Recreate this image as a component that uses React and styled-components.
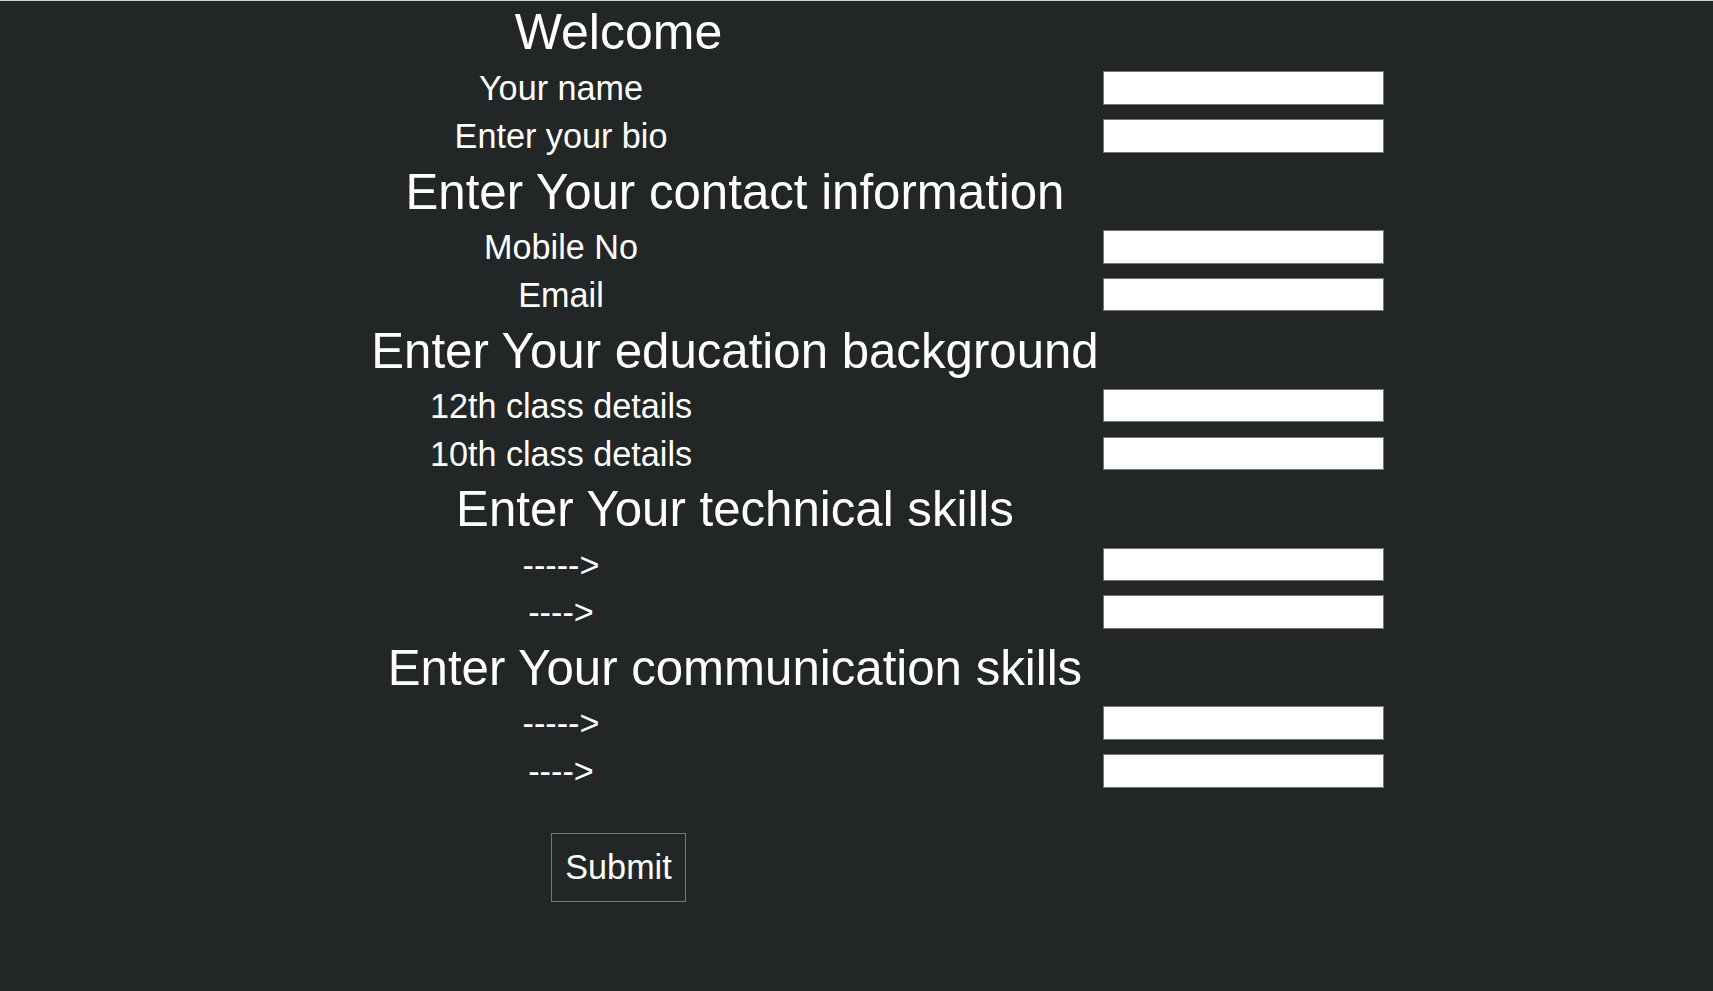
// Import dependencies
import React from 'react'
import styled, { createGlobalStyle } from 'styled-components'

// Global styles
const GlobalStyle = createGlobalStyle`
html, body {
  margin: 0;
  padding: 0;
  background-color: #222627;
}

body {
  color: #ffffff;
  font-family: 'Liberation Sans', Arial, sans-serif;
}
`

// Styled components
const Page = styled.div`
min-height: 100vh;
box-sizing: border-box;
border-top: 1px solid #cfcfcf;
padding-left: 367px;
`

const Form = styled.form`
display: grid;
grid-template-columns: 388px 115px 233px 281px;
align-items: center;
`

const Title = styled.h1`
margin: 0;
grid-column: 1 / span 2;
text-align: center;
font-size: 50px;
font-weight: 400;
line-height: 63.25px;
white-space: nowrap;
`

const Heading = styled.h2`
margin: 0;
grid-column: 1 / span 3;
text-align: center;
font-size: 49.2px;
font-weight: 400;
line-height: 63.25px;
white-space: nowrap;
`

const Label = styled.label`
grid-column: 1;
padding-top: 2px;
text-align: center;
font-size: 34.2px;
line-height: 45.75px;
white-space: nowrap;
`

const Input = styled.input`
grid-column: 4;
width: 281px;
height: 33.5px;
padding: 0;
box-sizing: border-box;
border: 1px solid #767676;
background-color: #ffffff;
`

const Submit = styled.button`
grid-column: 1 / span 2;
justify-self: center;
margin-top: 38px;
padding: 14px 13px;
color: #ffffff;
font-size: 34.2px;
font-family: 'Liberation Sans', Arial, sans-serif;
background-color: transparent;
border: 1px solid #777777;
cursor: pointer;
`

// Form data
const sections = [
  { title: null, fields: ['Your name', 'Enter your bio'] },
  { title: 'Enter Your contact information', fields: ['Mobile No', 'Email'] },
  { title: 'Enter Your education background', fields: ['12th class details', '10th class details'] },
  { title: 'Enter Your technical skills', fields: ['----->', '---->'] },
  { title: 'Enter Your communication skills', fields: ['----->', '---->'] },
]

function App() {
  return (
    <>
      <GlobalStyle />
      <Page>
        <Form onSubmit={e => e.preventDefault()}>
          <Title>Welcome</Title>
          {sections.map((section, i) => (
            <React.Fragment key={i}>
              {section.title && <Heading>{section.title}</Heading>}
              {section.fields.map((field, j) => (
                <React.Fragment key={j}>
                  <Label>{field}</Label>
                  <Input type="text" />
                </React.Fragment>
              ))}
            </React.Fragment>
          ))}
          <Submit type="submit">Submit</Submit>
        </Form>
      </Page>
    </>
  )
}

export default App
